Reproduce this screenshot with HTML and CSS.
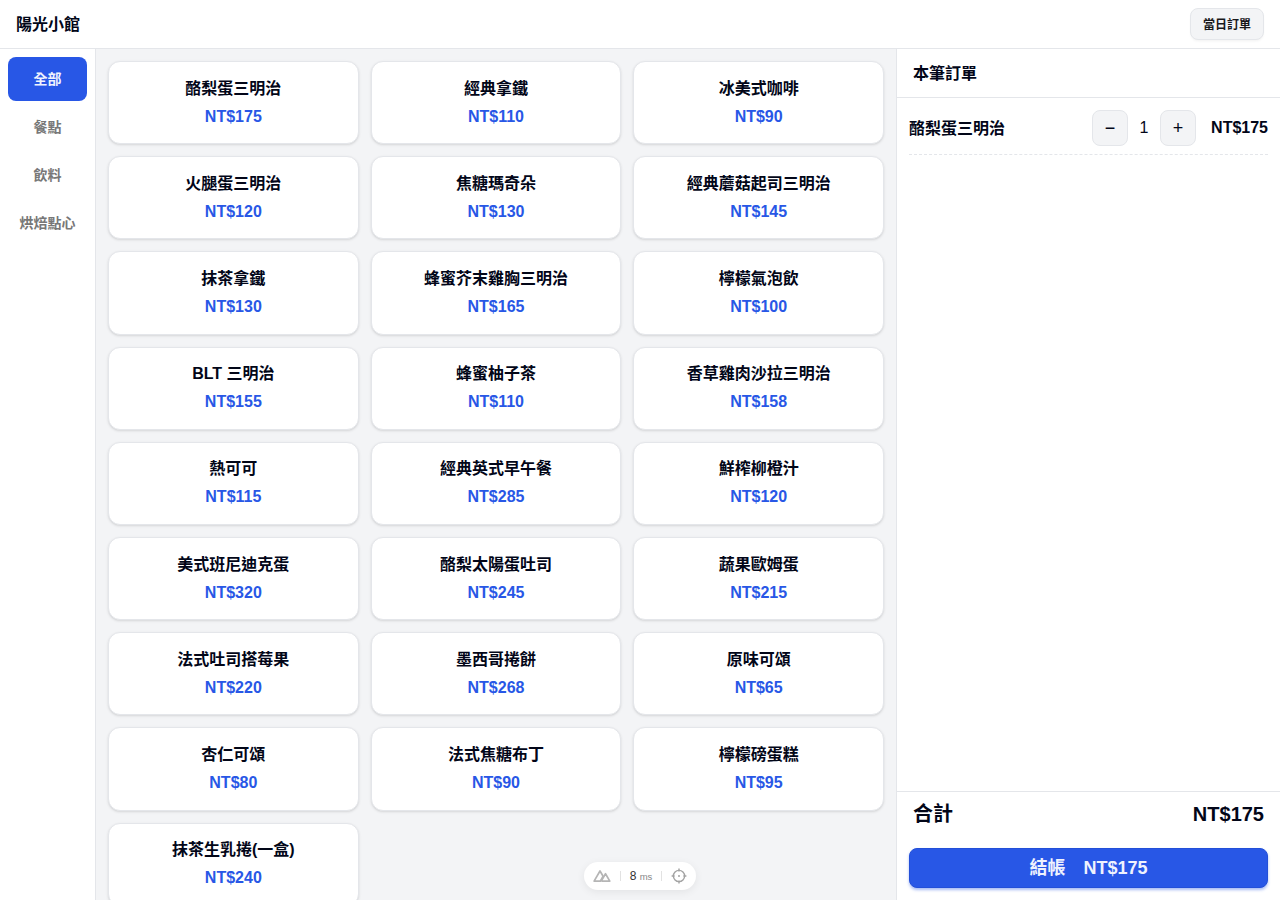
FILE: index.html
```html
<!DOCTYPE html>
<html lang="zh-Hant">
<head>
    <meta charset="UTF-8">
    <meta name="viewport" content="width=device-width, initial-scale=1.0">
    <title>陽光小館</title>
    <link rel="stylesheet" href="styles.css">
</head>
<body>
    <header class="topbar">
        <h1>陽光小館</h1>
        <button class="btn-orders">當日訂單</button>
    </header>

    <div class="layout">
        <nav class="categories">
            <button class="category active">全部</button>
            <button class="category">餐點</button>
            <button class="category">飲料</button>
            <button class="category">烘焙點心</button>
        </nav>

        <main class="menu">
            <button class="item"><span class="name">酪梨蛋三明治</span><span class="price">NT$175</span></button>
            <button class="item"><span class="name">經典拿鐵</span><span class="price">NT$110</span></button>
            <button class="item"><span class="name">冰美式咖啡</span><span class="price">NT$90</span></button>
            <button class="item"><span class="name">火腿蛋三明治</span><span class="price">NT$120</span></button>
            <button class="item"><span class="name">焦糖瑪奇朵</span><span class="price">NT$130</span></button>
            <button class="item"><span class="name">經典蘑菇起司三明治</span><span class="price">NT$145</span></button>
            <button class="item"><span class="name">抹茶拿鐵</span><span class="price">NT$130</span></button>
            <button class="item"><span class="name">蜂蜜芥末雞胸三明治</span><span class="price">NT$165</span></button>
            <button class="item"><span class="name">檸檬氣泡飲</span><span class="price">NT$100</span></button>
            <button class="item"><span class="name">BLT 三明治</span><span class="price">NT$155</span></button>
            <button class="item"><span class="name">蜂蜜柚子茶</span><span class="price">NT$110</span></button>
            <button class="item"><span class="name">香草雞肉沙拉三明治</span><span class="price">NT$158</span></button>
            <button class="item"><span class="name">熱可可</span><span class="price">NT$115</span></button>
            <button class="item"><span class="name">經典英式早午餐</span><span class="price">NT$285</span></button>
            <button class="item"><span class="name">鮮榨柳橙汁</span><span class="price">NT$120</span></button>
            <button class="item"><span class="name">美式班尼迪克蛋</span><span class="price">NT$320</span></button>
            <button class="item"><span class="name">酪梨太陽蛋吐司</span><span class="price">NT$245</span></button>
            <button class="item"><span class="name">蔬果歐姆蛋</span><span class="price">NT$215</span></button>
            <button class="item"><span class="name">法式吐司搭莓果</span><span class="price">NT$220</span></button>
            <button class="item"><span class="name">墨西哥捲餅</span><span class="price">NT$268</span></button>
            <button class="item"><span class="name">原味可頌</span><span class="price">NT$65</span></button>
            <button class="item"><span class="name">杏仁可頌</span><span class="price">NT$80</span></button>
            <button class="item"><span class="name">法式焦糖布丁</span><span class="price">NT$90</span></button>
            <button class="item"><span class="name">檸檬磅蛋糕</span><span class="price">NT$95</span></button>
            <button class="item"><span class="name">抹茶生乳捲(一盒)</span><span class="price">NT$240</span></button>
        </main>

        <aside class="order">
            <h2>本筆訂單</h2>
            <div class="order-lines">
                <div class="order-line">
                    <span class="line-name">酪梨蛋三明治</span>
                    <div class="stepper">
                        <button class="btn-step">−</button>
                        <span class="qty">1</span>
                        <button class="btn-step">+</button>
                    </div>
                    <span class="line-price">NT$175</span>
                </div>
            </div>
            <div class="order-footer">
                <div class="total"><span>合計</span><span>NT$175</span></div>
                <button class="btn-checkout">結帳　NT$175</button>
            </div>
        </aside>
    </div>

    <div class="devtools">
        <svg class="nuxt" width="18" height="12" viewBox="0 0 18 12" fill="none" stroke="#b5b5b5" stroke-width="1.7" stroke-linejoin="round">
            <path d="M8.6 11.1H1.1L7 1l3.1 5.3-2.8 4.8"/>
            <path d="M8.6 11.1h8.2L12.5 3.7 8.2 11.1"/>
        </svg>
        <span class="divider"></span>
        <span class="timing">8 <small>ms</small></span>
        <span class="divider"></span>
        <svg width="16" height="16" viewBox="0 0 16 16" fill="none" stroke="#a3a3a3" stroke-width="1.4">
            <circle cx="8" cy="8" r="5.6"/>
            <path d="M8 .6v3M8 12.4v3M.6 8h3M12.4 8h3"/>
            <circle cx="8" cy="8" r="1" fill="#a3a3a3" stroke="none"/>
        </svg>
    </div>
</body>
</html>
```

FILE: styles.css
```css
* {
    box-sizing: border-box;
}
body {
    margin: 0;
    height: 100vh;
    display: flex;
    flex-direction: column;
    overflow: hidden;
    font-family: "Liberation Sans", "Noto Sans CJK TC", sans-serif;
    font-size: 16px;
    line-height: 24px;
    color: #020618;
    background: #fff;
}
button {
    font: inherit;
    color: inherit;
    padding: 0;
    cursor: pointer;
}
.topbar {
    height: 49px;
    flex: none;
    display: flex;
    align-items: center;
    justify-content: space-between;
    padding: 0 16px;
    border-bottom: 1px solid #e4e6ea;
}
.topbar h1 {
    margin: 0;
    padding-top: 1px;
    font-size: 16px;
}
.btn-orders {
    width: 74px;
    height: 32px;
    padding-top: 1px;
    font-size: 12px;
    font-weight: 600;
    color: #18181b;
    background: #f3f4f6;
    border: 1px solid #e4e6ea;
    border-radius: 8px;
    box-shadow: 0 2px 3px -1px rgba(0,0,0,0.06);
}
.layout {
    flex: 1;
    min-height: 0;
    display: grid;
    grid-template-columns: 96px 1fr 384px;
}
.categories {
    display: flex;
    flex-direction: column;
    gap: 4px;
    padding: 8px;
    border-right: 1px solid #e4e6ea;
}
.category {
    height: 44px;
    font-size: 14px;
    font-weight: 600;
    color: #777;
    background: none;
    border: none;
    border-radius: 8px;
}
.category.active {
    color: #eff2fe;
    background: #2857e6;
}
.menu {
    display: grid;
    grid-template-columns: repeat(3, 1fr);
    grid-auto-rows: 83.2px;
    gap: 12px;
    padding: 12px;
    overflow: hidden;
    background: #f3f4f6;
}
.item {
    display: flex;
    flex-direction: column;
    align-items: center;
    justify-content: center;
    gap: 4px;
    font-weight: 600;
    background: #fff;
    border: 1px solid #e4e6ea;
    border-radius: 12px;
    box-shadow: 0 1px 3px rgba(0,0,0,0.1), 0 1px 2px -1px rgba(0,0,0,0.1);
}
.price {
    color: #2857e6;
}
.order {
    display: flex;
    flex-direction: column;
    border-left: 1px solid #e4e6ea;
}
.order h2 {
    margin: 0;
    padding: 13px 16px 11px;
    font-size: 16px;
    border-bottom: 1px solid #e4e6ea;
}
.order-lines {
    flex: 1;
    padding: 4px 12px;
}
.order-line {
    display: flex;
    align-items: center;
    padding: 8px 0;
    font-weight: 600;
    border-bottom: 1px dashed #e4e6ea;
}
.line-name {
    flex: 1;
    padding-top: 1px;
}
.stepper {
    display: flex;
    align-items: center;
    font-weight: 400;
}
.btn-step {
    width: 36px;
    height: 36px;
    font-size: 18px;
    background: #f3f4f6;
    border: 1px solid #e4e6ea;
    border-radius: 8px;
}
.qty {
    width: 32px;
    text-align: center;
}
.line-price {
    width: 72px;
    text-align: right;
}
.order-footer {
    padding: 8px 12px 12px;
    border-top: 1px solid #e4e6ea;
}
.total {
    display: flex;
    justify-content: space-between;
    padding: 0 4px 20px;
    font-size: 20px;
    line-height: 28px;
    font-weight: 700;
}
.btn-checkout {
    width: 100%;
    height: 40px;
    display: block;
    font-size: 18px;
    font-weight: 600;
    color: #eff2fe;
    background: #2857e6;
    border: 1px solid #234fd8;
    border-radius: 8px;
    box-shadow: 0 2px 3px rgba(40,87,230,0.4);
}
.devtools {
    position: absolute;
    left: 584px;
    bottom: 10px;
    width: 112px;
    height: 28px;
    display: flex;
    align-items: center;
    justify-content: space-between;
    padding: 0 9px;
    background: #fff;
    border-radius: 14px;
    box-shadow: 0 2px 8px rgba(0,0,0,0.07);
}
.divider {
    width: 1px;
    height: 10px;
    background: #e2e2e2;
}
.timing {
    font-size: 12px;
    line-height: 16px;
    color: #333;
}
.timing small {
    font-family: "Liberation Sans", sans-serif;
    font-size: 9.5px;
    color: #888;
}
```
